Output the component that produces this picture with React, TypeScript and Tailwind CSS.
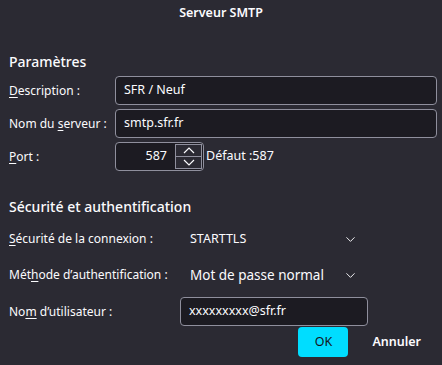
import { ChevronDown } from 'lucide-react';

function Key({ children }: { children: string }) {
  return <span className="underline underline-offset-2">{children}</span>;
}

function Label({ children, width }: { children: React.ReactNode; width: string }) {
  return <div className={`${width} shrink-0 whitespace-nowrap text-[12px] leading-none`}>{children}</div>;
}

function TextBox({ value, className }: { value: string; className: string }) {
  return (
    <div className={`h-[29px] flex items-center px-2 rounded-[4px] border border-[#8f8f9d] bg-[#1c1b22] text-[12.5px] ${className}`}>
      {value}
    </div>
  );
}

function Select({ value, big }: { value: string; big?: boolean }) {
  return (
    <div className="w-[186px] h-[28px] flex items-center justify-between pl-[10px] pr-[8px]">
      <span className={big ? 'text-[13.5px]' : 'text-[12.5px]'}>{value}</span>
      <ChevronDown size={15} strokeWidth={1.5} className="text-[#fbfbfe]" />
    </div>
  );
}

// small spinner arrow, flipped for the down half
function Arrow({ up }: { up?: boolean }) {
  return (
    <svg width="12" height="7" viewBox="0 0 12 7" fill="none" stroke="currentColor" strokeWidth="1.2">
      <polyline points={up ? '1,6 6,1 11,6' : '1,1 6,6 11,1'} />
    </svg>
  );
}

export default function App() {
  return (
    <div
      className="w-[442px] h-[365px] bg-[#2b2a33] text-[#fbfbfe] overflow-hidden"
      style={{ fontFamily: '"Noto Sans", "Open Sans", sans-serif' }}
    >
      <div className="h-[26px] flex items-center justify-center text-[12.5px] font-semibold">Serveur SMTP</div>

      <div className="pl-[9px] pr-[5px]">
        <h2 className="mt-[25px] h-[20px] flex items-center text-[14px] font-medium">Paramètres</h2>

        <div className="mt-[5px] flex flex-col gap-[4px]">
          <div className="flex items-center">
            <Label width="w-[106px]"><Key>D</Key>escription :</Label>
            <TextBox value="SFR / Neuf" className="flex-1" />
          </div>
          <div className="flex items-center">
            <Label width="w-[106px]">Nom du <Key>s</Key>erveur :</Label>
            <TextBox value="smtp.sfr.fr" className="flex-1" />
          </div>
          <div className="flex items-center">
            <Label width="w-[106px]"><Key>P</Key>ort :</Label>
            <div className="w-[89px] h-[29px] flex items-center rounded-[4px] border border-[#8f8f9d] bg-[#1c1b22]">
              <div className="flex-1 text-right pr-[8px] text-[12.5px]">587</div>
              <div className="w-[27px] h-[25px] mr-[1px] flex flex-col border border-[#8f8f9d] bg-[#2b2a33]">
                <div className="flex-1 flex items-center justify-center border-b border-[#8f8f9d]">
                  <Arrow up />
                </div>
                <div className="flex-1 flex items-center justify-center">
                  <Arrow />
                </div>
              </div>
            </div>
            <span className="ml-[2px] text-[12.5px]">Défaut :587</span>
          </div>
        </div>

        <h2 className="mt-[25px] h-[20px] flex items-center text-[14px] font-medium">Sécurité et authentification</h2>

        <div className="mt-[9px] flex flex-col gap-[8px]">
          <div className="flex items-center">
            <Label width="w-[171px]"><Key>S</Key>écurité de la connexion :</Label>
            <Select value="STARTTLS" />
          </div>
          <div className="flex items-center">
            <Label width="w-[171px]">Mét<Key>h</Key>ode d’authentification :</Label>
            <Select value="Mot de passe normal" big />
          </div>
          <div className="flex items-center">
            <Label width="w-[171px]">No<Key>m</Key> d’utilisateur :</Label>
            <TextBox value="xxxxxxxxx@sfr.fr" className="w-[188px]" />
          </div>
        </div>

        <div className="mt-[1px] flex items-center justify-end pr-[16px] gap-[24px]">
          <button className="w-[50px] h-[30px] rounded-[4px] bg-[#00ddff] text-[#15141a] text-[12.5px]">OK</button>
          <button className="h-[30px] text-[12.5px] font-semibold">Annuler</button>
        </div>
      </div>
    </div>
  );
}
